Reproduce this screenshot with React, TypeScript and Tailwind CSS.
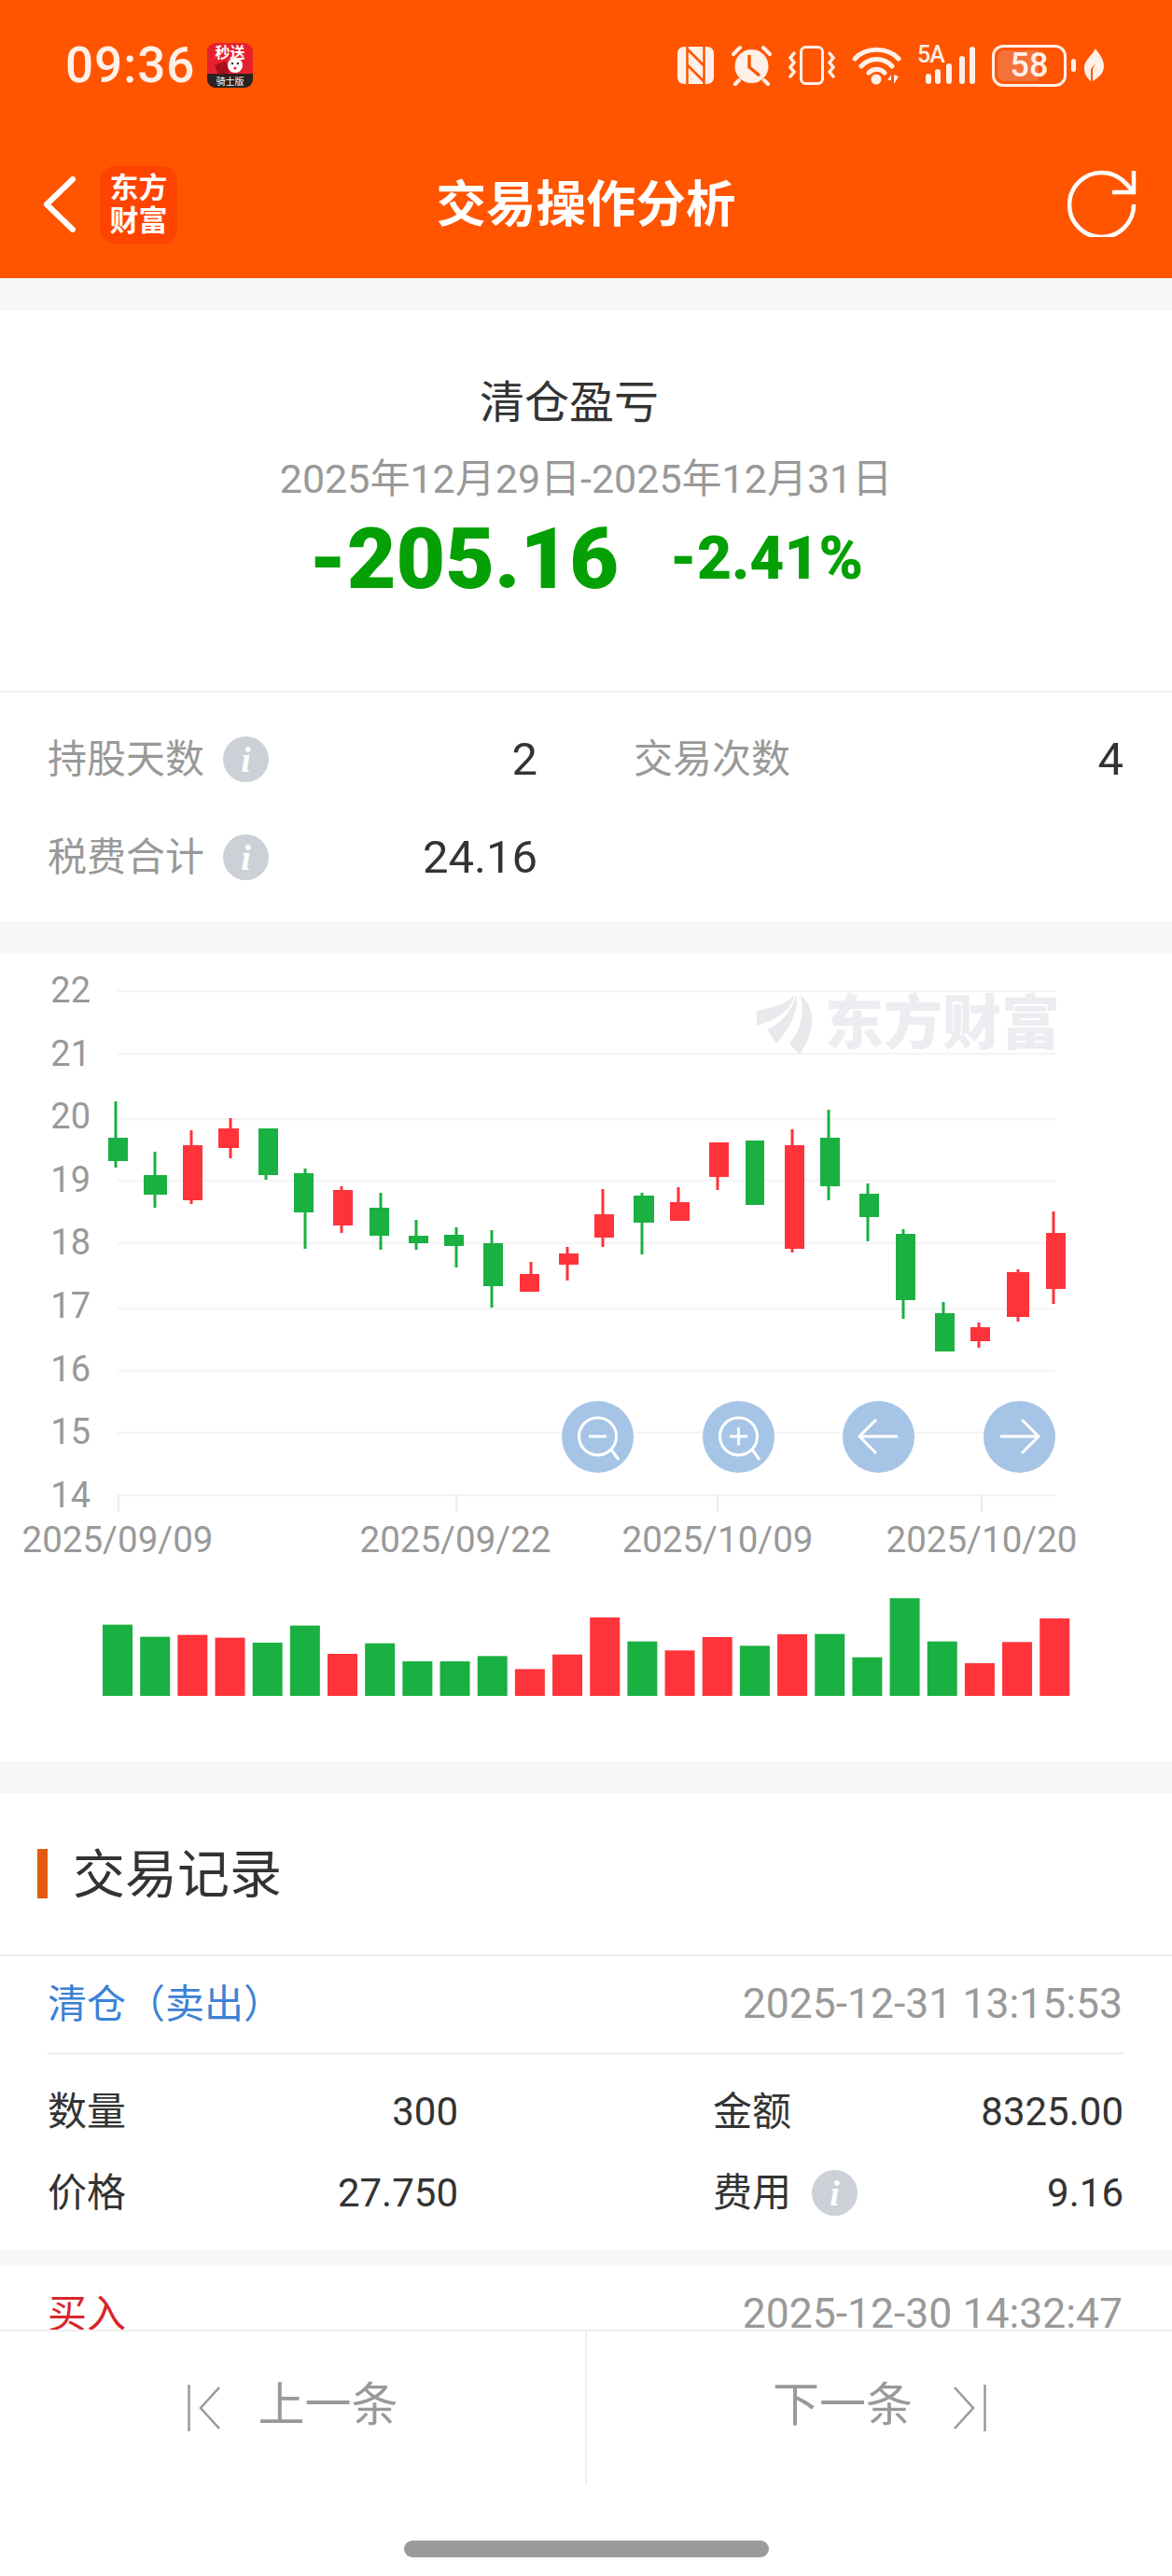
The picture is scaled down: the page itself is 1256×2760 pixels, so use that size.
const FONT = "font-['Roboto','Noto_Sans_CJK_SC',sans-serif]";

type Candle = [number, number, number, number, number, number, number, "g" | "r"];

// left, right, bodyTop, bodyBottom, wickX, wickTop, wickBottom, colour
const candles: Candle[] = [
  [116, 137, 1219, 1244, 124, 1180, 1251, "g"],
  [154, 179, 1259, 1280, 166, 1234, 1294, "g"],
  [196, 217, 1227, 1286, 205, 1211, 1290, "r"],
  [234, 256, 1209, 1230, 247, 1198, 1241, "r"],
  [277, 298, 1209, 1259, 285, 1209, 1264, "g"],
  [315, 336, 1257, 1299, 327, 1252, 1338, "g"],
  [357, 378, 1275, 1313, 366, 1271, 1321, "r"],
  [396, 417, 1294, 1324, 408, 1278, 1339, "g"],
  [438, 459, 1324, 1332, 446, 1307, 1339, "g"],
  [476, 497, 1323, 1335, 489, 1315, 1358, "g"],
  [518, 539, 1332, 1378, 527, 1318, 1401, "g"],
  [557, 578, 1365, 1384, 569, 1352, 1384, "r"],
  [599, 620, 1343, 1355, 608, 1336, 1372, "r"],
  [637, 658, 1301, 1326, 646, 1274, 1336, "r"],
  [679, 701, 1281, 1310, 688, 1278, 1344, "g"],
  [718, 739, 1288, 1308, 727, 1272, 1308, "r"],
  [760, 781, 1224, 1261, 769, 1224, 1275, "r"],
  [799, 819, 1222, 1291, 809, 1222, 1291, "g"],
  [841, 862, 1227, 1338, 849, 1210, 1342, "r"],
  [879, 900, 1219, 1271, 888, 1189, 1286, "g"],
  [921, 942, 1279, 1304, 930, 1268, 1330, "g"],
  [960, 981, 1322, 1393, 968, 1317, 1413, "g"],
  [1002, 1023, 1407, 1448, 1011, 1395, 1448, "g"],
  [1040, 1061, 1422, 1437, 1049, 1417, 1444, "r"],
  [1079, 1103, 1363, 1411, 1091, 1360, 1416, "r"],
  [1121, 1142, 1321, 1381, 1129, 1298, 1397, "r"],
];

const volumes: [number, "g" | "r"][] = [
  [182, "g"], [221, "g"], [215, "r"], [224, "r"], [240, "g"], [185, "g"], [276, "r"], [242, "g"], [300, "g"], [300, "g"],
  [283, "g"], [325, "r"], [278, "r"], [159, "r"], [236, "g"], [265, "r"], [222, "r"], [250, "g"], [213, "r"], [212, "g"],
  [287, "g"], [97, "g"], [236, "g"], [306, "r"], [238, "r"], [162, "r"],
];

// label, line y, label baseline
const grid = [
  ["22", 1062, 1074], ["21", 1129, 1142], ["20", 1199, 1209], ["19", 1265, 1277], ["18", 1332, 1344],
  ["17", 1402, 1412], ["16", 1469, 1480], ["15", 1535, 1547], ["14", 1602, 1615],
] as const;

const xLabels = [
  ["2025/09/09", 126, 127], ["2025/09/22", 488, 489], ["2025/10/09", 769, 769], ["2025/10/20", 1052, 1052],
] as const;

const GREEN = "#1bb042";
const RED = "#ff333a";

function StatusBar() {
  return (
    <div className="flex h-[140px] items-center pl-[70px] pr-[73px] text-[#fff0e8]">
      <span className="text-[53px] font-medium leading-none tracking-[1px]">09:36</span>
      <svg width="49" height="48" viewBox="0 0 49 48" className="ml-[13px] -mt-[1px]">
        <rect width="49" height="48" rx="9" fill="#e8202e" />
        <path d="M0 33 H49 V39 A9 9 0 0 1 40 48 H9 A9 9 0 0 1 0 39 Z" fill="#2b2320" />
        <path d="M8 24 L20 19 L24 32 L12 34 Z" fill="#a80f1c" />
        <circle cx="30" cy="24" r="8" fill="#fff" />
        <circle cx="27" cy="22" r="1.2" fill="#222" />
        <circle cx="33" cy="22" r="1.2" fill="#222" />
        <circle cx="30" cy="27" r="1.6" fill="#e8202e" />
        <text x="24.5" y="16" textAnchor="middle" fontSize="16" fontWeight="700" fill="#fff" fontFamily="Noto Sans CJK SC">秒送</text>
        <text x="24.5" y="45" textAnchor="middle" fontSize="10" fill="#fff" fontFamily="Noto Sans CJK SC">骑士版</text>
      </svg>
      <div className="ml-auto flex items-center">
        <svg width="39" height="40" viewBox="0 0 39 40">
          <rect width="39" height="40" rx="7" fill="#fff0e8" />
          <path d="M10.5 0 V40 M28.5 0 V40 M11 3 L28 20 M11 20 L28 37" stroke="#ff5500" strokeWidth="2.5" fill="none" />
        </svg>
        <svg width="45" height="44" viewBox="0 0 45 44" className="ml-[18px]">
          <circle cx="22.5" cy="23" r="18" fill="#fff0e8" />
          <path d="M3 10 L10 3 M42 10 L35 3 M9 38 L5 42 M36 38 L40 42" stroke="#fff0e8" strokeWidth="4" strokeLinecap="round" />
          <path d="M20 11 V24 L31 33" stroke="#ff5500" strokeWidth="3.5" fill="none" />
        </svg>
        <svg width="50" height="42" viewBox="0 0 50 42" className="ml-[17px]">
          <rect x="13.5" y="1.5" width="23" height="39" rx="5" fill="none" stroke="#fff0e8" strokeWidth="3" />
          <path d="M6 8 L2 13 L6 18 L2 23 L6 28 L2 33 M44 8 L48 13 L44 18 L48 23 L44 28 L48 33" stroke="#fff0e8" strokeWidth="3.5" fill="none" strokeLinecap="round" />
        </svg>
        <svg width="55" height="42" viewBox="0 0 55 42" className="ml-[18px]">
          <path d="M3 14 C15 1 38 1 50 14 M10 22 C19 12 34 12 43 22 M18 29 C23 24 30 24 35 29" stroke="#fff0e8" strokeWidth="5" fill="none" strokeLinecap="round" />
          <circle cx="26" cy="36" r="5.5" fill="#fff0e8" />
          <path d="M38 37 L42 31 V37 Z M45 31 V41 L50 33 Z" fill="#fff0e8" />
        </svg>
        <div className="relative ml-[15px] h-[44px] w-[62px]">
          <span className="absolute left-0 top-[-2px] text-[25px] font-medium leading-[26px] tracking-[-1px]">5A</span>
          <svg width="62" height="44" viewBox="0 0 62 44" className="absolute left-0 top-0">
            <path d="M12 34 V39 M22 29 V39 M34 23 V39 M48 15 V39 M59 5 V39" stroke="#fff0e8" strokeWidth="6" strokeLinecap="round" />
          </svg>
        </div>
        <div className="relative ml-[18px] flex h-[45px] w-[80px] items-center justify-center overflow-hidden rounded-[12px] border-[3px] border-[#fff0e8]">
          <div className="absolute inset-y-[3px] left-[3px] w-[44px] rounded-l-[7px] bg-[#f4713a]" />
          <span className="relative text-[36px] font-medium leading-none">58</span>
        </div>
        <div className="ml-[5px] h-[14px] w-[5px] rounded-full bg-[#fff0e8]" />
        <svg width="21" height="36" viewBox="0 0 21 36" className="ml-[9px]">
          <path d="M12 0 C16 6 21 11 21 19 C21 27 15 31 9 35 L9 22 L12 16 L7 22 L7 35 C2 31 0 26 0 21 C0 12 8 8 12 0 Z" fill="#fff0e8" />
        </svg>
      </div>
    </div>
  );
}

function NavBar() {
  return (
    <div className="relative flex h-[158px] items-center pl-[45px] pr-[38px] text-white">
      <svg width="36" height="60" viewBox="0 0 36 60">
        <path d="M33 3 L5 30 L33 57" fill="none" stroke="#fff" strokeWidth="6" strokeLinecap="round" strokeLinejoin="round" />
      </svg>
      <div className="ml-[26px] flex h-[83px] w-[83px] flex-col items-center justify-center rounded-[16px] bg-[#ff4300] text-[31px] font-bold leading-[35px]">
        <span>东方</span>
        <span>财富</span>
      </div>
      <span className="absolute left-0 right-0 pt-[2px] text-center text-[53.5px] font-bold leading-none">交易操作分析</span>
      <svg width="74" height="72" viewBox="0 0 74 72" fill="none" stroke="#fff" strokeWidth="4.5" className="ml-auto -mt-[2px]">
        <path d="M71 37 A34.5 34.5 0 1 1 37 3 C47 3 57 8 64 16 L71 24" />
        <path d="M71 1 V24 H48" />
      </svg>
    </div>
  );
}

function Info() {
  return (
    <span className="flex h-[49px] w-[49px] items-center justify-center rounded-full bg-[#ccd0d7] font-['Liberation_Serif',serif] text-[38px] font-bold italic leading-none text-white">
      i
    </span>
  );
}

function Stat({ label, value, info }: { label: string; value: string; info?: boolean }) {
  return (
    <div className="flex w-[525px] items-center">
      <span className="text-[42px] text-[#999]">{label}</span>
      {info && <span className="ml-[20px]"><Info /></span>}
      <span className="ml-auto text-[49px] text-[#333]">{value}</span>
    </div>
  );
}

function Summary() {
  return (
    <section className="bg-white">
      <div className="flex h-[409px] flex-col items-center border-b-2 border-[#eee] pt-[69px]">
        <div className="pr-[36px] text-[48px] leading-[60px] text-[#333]">清仓盈亏</div>
        <div className="mt-[26px] text-[43px] leading-[50px] text-[#999]">2025年12月29日-2025年12月31日</div>
        <div className="mt-[11px] flex h-[100px] items-center font-black text-[#05a005]">
          <span className="text-[91px] leading-none">-205.16</span>
          <span className="ml-[55px] text-[64px] leading-none">-2.41%</span>
        </div>
      </div>
      <div className="h-[245px] pt-[19px] pl-[51px] pr-[52px]">
        <div className="flex h-[105px] items-center justify-between">
          <Stat label="持股天数" value="2" info />
          <Stat label="交易次数" value="4" />
        </div>
        <div className="flex h-[105px] items-center">
          <Stat label="税费合计" value="24.16" info />
        </div>
      </div>
    </section>
  );
}

function KLine() {
  return (
    <section className="h-[865px] bg-white">
      <svg width="1256" height="865" viewBox="0 1022 1256 865" className="block" fontFamily="Roboto, sans-serif">
        {grid.map(([label, y, base]) => (
          <g key={label}>
            <line x1="126" x2="1131" y1={y} y2={y} stroke="#f5f5f5" strokeWidth="2.5" />
            <text x="97" y={base} textAnchor="end" fontSize="38" fill="#999">{label}</text>
          </g>
        ))}
        {xLabels.map(([label, cx, tick]) => (
          <g key={label}>
            <line x1={tick} x2={tick} y1="1602" y2="1620" stroke="#eee" strokeWidth="2.5" />
            <text x={cx} y="1663" textAnchor="middle" fontSize="38.5" fill="#999">{label}</text>
          </g>
        ))}

        <path d="M811 1083 C830 1079 845 1075 851 1066 C850 1079 838 1090 811 1099 Z" fill="#e9e9ed" />
        <path d="M853 1066 C857 1082 846 1102 832 1118 L822 1103 C838 1096 850 1082 853 1066 Z" fill="#e9e9ed" />
        <path d="M857 1066 C873 1076 876 1102 857 1130 L846 1118 C859 1103 863 1082 857 1066 Z" fill="#e9e9ed" />
        <text x="884" y="1118" fontSize="63" fontWeight="900" fill="#ecedf0" fontFamily="Noto Sans CJK SC">东方财富</text>

        {candles.map(([l, r, t, b, wx, wt, wb, c], i) => (
          <g key={i} fill={c === "g" ? GREEN : RED}>
            <rect x={wx - 1.5} y={wt} width="3" height={wb - wt} />
            <rect x={l} y={t} width={r - l} height={b - t} />
          </g>
        ))}

        <g fill="#a6c5e6">
          <circle cx="640.5" cy="1539.5" r="38.5" />
          <circle cx="791.5" cy="1539.5" r="38.5" />
          <circle cx="941.5" cy="1539.5" r="38.5" />
          <circle cx="1092.5" cy="1539.5" r="38.5" />
        </g>
        <g fill="none" stroke="#fff" strokeWidth="3">
          <circle cx="640.5" cy="1539" r="20" />
          <path d="M631 1539 H650 M655 1553 L663 1564" />
          <circle cx="791.5" cy="1539" r="20" />
          <path d="M782 1539 H801 M791.5 1529.5 V1548.5 M806 1553 L814 1564" />
          <path d="M921 1539 H962 M939 1521 L921 1539 L939 1557" />
          <path d="M1113 1539 H1072 M1095 1521 L1113 1539 L1095 1557" />
        </g>

        {volumes.map(([top, c], i) => {
          const y = 1680 + top / 3;
          return <rect key={i} x={110 + i * 40.17} y={y} width="32" height={1817 - y} fill={c === "g" ? GREEN : RED} />;
        })}
      </svg>
    </section>
  );
}

function Cell({ label, value, info }: { label: string; value: string; info?: boolean }) {
  return (
    <div className="flex h-[87px] w-[440px] items-center text-[42px] text-[#333]">
      <span>{label}</span>
      {info && <span className="ml-[22px]"><Info /></span>}
      <span className="ml-auto">{value}</span>
    </div>
  );
}

function RecordHead({ title, time, color }: { title: string; time: string; color: string }) {
  return (
    <div className="mx-[51px] flex h-[105px] items-center justify-between border-b-2 border-[#eee]">
      <span className={`text-[42px] ${color}`}>{title}</span>
      <span className="mr-[2px] text-[44.5px] text-[#999]">{time}</span>
    </div>
  );
}

function Records() {
  return (
    <section className="bg-white">
      <div className="flex h-[175px] items-center border-b-2 border-[#eee] pl-[40px]">
        <div className="h-[53px] w-[11px] bg-[#e35a10]" />
        <h2 className="ml-[27px] pt-[3px] text-[56px] font-normal leading-none text-[#333]">交易记录</h2>
      </div>
      <RecordHead title="清仓（卖出）" time="2025-12-31 13:15:53" color="text-[#3b82d6]" />
      <div className="h-[210px] pt-[18px] pl-[51px] pr-[52px]">
        <div className="flex justify-between">
          <Cell label="数量" value="300" />
          <Cell label="金额" value="8325.00" />
        </div>
        <div className="flex justify-between">
          <Cell label="价格" value="27.750" />
          <Cell label="费用" value="9.16" info />
        </div>
      </div>
      <div className="h-[17px] bg-[#f7f7f7]" />
      <RecordHead title="买入" time="2025-12-30 14:32:47" color="text-[#d9262b]" />
    </section>
  );
}

function Footer() {
  return (
    <footer className="h-[264px] shrink-0 border-t-2 border-[#eee] bg-white text-[#999]">
      <div className="flex h-[164px]">
        <div className="flex w-[627px] items-center justify-center text-[50px] leading-none">
          <svg width="36" height="50" viewBox="0 0 36 50" fill="none" stroke="#999" strokeWidth="2.5">
            <path d="M1.5 0 V50 M34 3 L14 25 L34 47" />
          </svg>
          <span className="mb-[6px] ml-[40px]">上一条</span>
        </div>
        <div className="w-[2px] bg-[#eee]" />
        <div className="flex w-[627px] items-center justify-center text-[50px] leading-none">
          <span className="mb-[6px] mr-[43px]">下一条</span>
          <svg width="36" height="50" viewBox="0 0 36 50" fill="none" stroke="#999" strokeWidth="2.5">
            <path d="M34.5 0 V50 M2 3 L22 25 L2 47" />
          </svg>
        </div>
      </div>
      <div className="mx-auto mt-[60px] h-[18px] w-[391px] rounded-[9px] bg-[#9b9b9b]" />
    </footer>
  );
}

export default function App() {
  return (
    <div className={`flex h-[2760px] w-[1256px] flex-col overflow-hidden bg-[#f7f7f7] ${FONT}`}>
      <header className="h-[298px] shrink-0 bg-[#ff5500]">
        <StatusBar />
        <NavBar />
      </header>
      <main className="min-h-0 flex-1 overflow-hidden pt-[35px]">
        <Summary />
        <div className="h-[35px]" />
        <KLine />
        <div className="h-[34px]" />
        <Records />
      </main>
      <Footer />
    </div>
  );
}
